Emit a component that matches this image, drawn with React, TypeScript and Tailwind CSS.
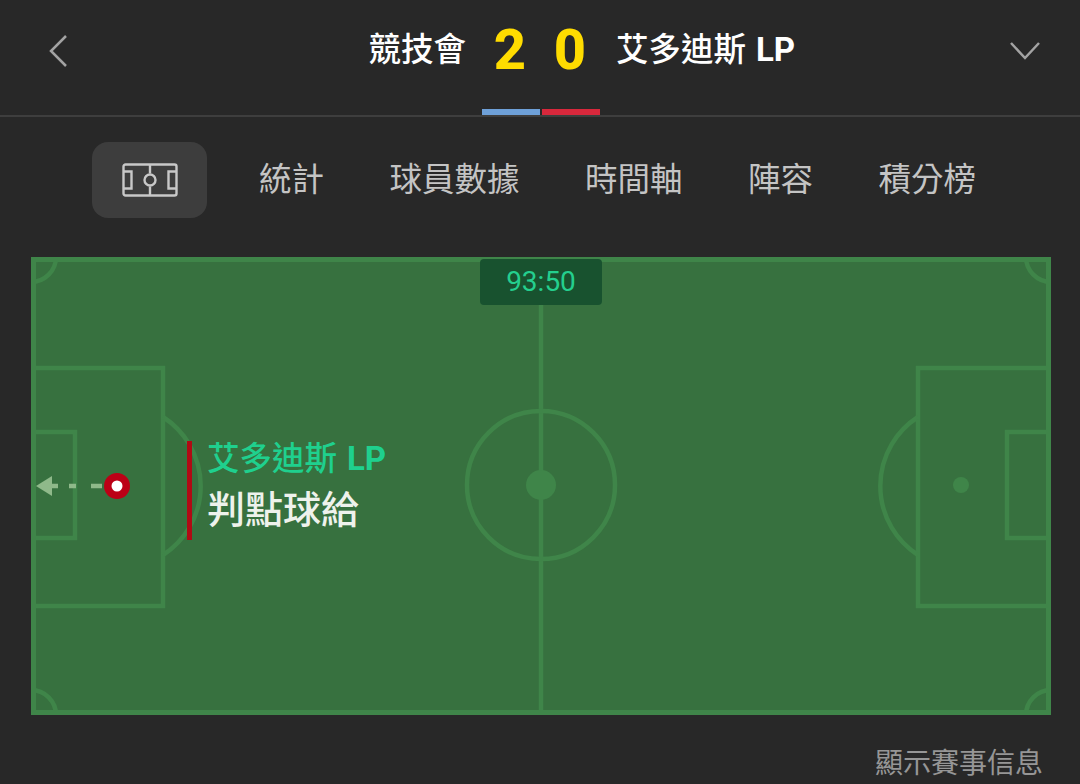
const cjk = { fontFamily: '"Roboto", "Noto Sans CJK TC", sans-serif' }

function PitchIcon() {
  return (
    <svg width="56" height="34" viewBox="0 0 56 34" fill="none" stroke="#c8c8c8" strokeWidth="2.4">
      <rect x="1.5" y="1.5" width="53" height="31" rx="2" />
      <path d="M28 1.5v9M28 23.5v9" />
      <circle cx="28" cy="17" r="5.5" />
      <path d="M1.5 8.5h8v17h-8M54.5 8.5h-8v17h8" />
    </svg>
  )
}

function PitchLines() {
  return (
    <svg
      className="absolute inset-0"
      width="1020"
      height="458"
      viewBox="0 0 1020 458"
      fill="none"
      stroke="#3f8549"
      strokeWidth="4.5"
    >
      {/* halfway line + centre */}
      <path d="M510 0v458" />
      <circle cx="510" cy="228" r="74" />
      <circle cx="510" cy="228" r="15" fill="#3f8549" stroke="none" />

      {/* left end */}
      <path d="M0 111h132v238H0" />
      <path d="M0 175h44v106H0" />
      <path d="M132 160a82 82 0 0 1 0 138" />

      {/* right end */}
      <path d="M1020 111H887v238h133" />
      <path d="M1020 175h-44v106h44" />
      <path d="M887 160a82 82 0 0 0 0 138" />
      <circle cx="930" cy="228" r="8" fill="#3f8549" stroke="none" />

      {/* corners */}
      <path d="M25 0a25 25 0 0 1-25 25" />
      <path d="M995 0a25 25 0 0 0 25 25" />
      <path d="M25 458a25 25 0 0 0-25-25" />
      <path d="M995 458a25 25 0 0 1 25-25" />

      {/* field outline */}
      <rect x="2.5" y="2.5" width="1015" height="453" strokeWidth="5" />
    </svg>
  )
}

function PenaltyMarker() {
  return (
    <svg className="absolute left-[4px] top-[215px]" width="96" height="28" viewBox="0 0 96 28" fill="none">
      <path d="M1 14l16-10v20z" fill="#8fb98a" />
      <path d="M17 14h6M34 14h7M56 14h11" stroke="#8fb98a" strokeWidth="4.5" />
      <circle cx="82" cy="14" r="13" fill="#bc0016" />
      <circle cx="82" cy="14" r="5.5" fill="#fff" />
    </svg>
  )
}

export default function App() {
  const tabs = ['統計', '球員數據', '時間軸', '陣容', '積分榜']

  return (
    <div className="w-[1080px] h-[784px] overflow-hidden bg-[#282828]" style={cjk}>
      {/* Header */}
      <div className="relative h-[117px] border-b-2 border-[#3e3e3e]">
        <div className="flex items-center justify-between h-[102px] pl-[48px] pr-[39px]">
          <svg width="20" height="34" viewBox="0 0 20 34" fill="none" stroke="#a3a3a3" strokeWidth="2.5">
            <path d="M18 2L3 17l15 15" />
          </svg>
          <svg width="32" height="20" viewBox="0 0 32 20" fill="none" stroke="#a3a3a3" strokeWidth="2.5">
            <path d="M2 2l14 15L30 2" />
          </svg>
        </div>
        <div className="absolute top-0 left-0 w-full h-[100px] flex items-center text-white text-[32.5px] font-medium">
          <span className="w-[466px] text-right">競技會</span>
          <span className="w-[60px] text-right text-[56px] font-extrabold text-[#ffdc00]">2</span>
          <span className="w-[60px] text-right text-[56px] font-extrabold text-[#ffdc00]">0</span>
          <span className="ml-[30px]">
            艾多迪斯<span className="ml-[10px] font-bold text-[33px]">LP</span>
          </span>
        </div>
        <div className="absolute left-[482px] bottom-0 flex gap-[2px]">
          <div className="w-[58px] h-[6px] bg-[#6ea0d8]" />
          <div className="w-[58px] h-[6px] bg-[#d8283c]" />
        </div>
      </div>

      {/* Tabs */}
      <div className="flex items-center pl-[92px] pt-[25px] text-[32.5px] text-[#c4c4c4]">
        <div className="flex items-center justify-center w-[115px] h-[76px] rounded-2xl bg-[#3d3d3d] mr-[52px]">
          <PitchIcon />
        </div>
        <div className="flex gap-[65.5px]">
          {tabs.map((t) => (
            <span key={t}>{t}</span>
          ))}
        </div>
      </div>

      {/* Pitch */}
      <div className="relative w-[1020px] h-[458px] ml-[31px] mt-[39px] bg-[#37713f]">
        <PitchLines />
        <div className="absolute left-[449px] top-[2px] flex items-center justify-center w-[122px] h-[46px] rounded-sm bg-[#18522f] text-[28px] text-[#24cf8e]">
          93:50
        </div>
        <PenaltyMarker />
        <div className="absolute left-[156px] top-[184px] flex flex-col border-l-[5px] border-[#b00a14] pl-[15px] h-[99px]">
          <span className="text-[32.5px] font-medium leading-[36px] text-[#1fd08e]">
            艾多迪斯<span className="ml-[10px] font-bold text-[33px]">LP</span>
          </span>
          <span className="text-[38px] font-medium leading-[48px] mt-[9px] text-[#eef2ec]">判點球給</span>
        </div>
      </div>

      <div className="flex justify-end pr-[37px] pt-[29px] text-[28px] leading-[40px] text-[#969696]">
        顯示賽事信息
      </div>
    </div>
  )
}
